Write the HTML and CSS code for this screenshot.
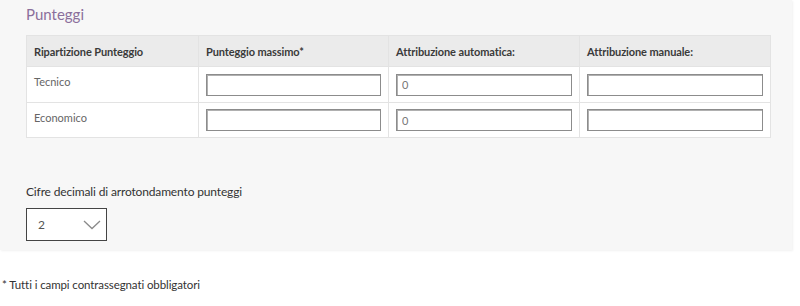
FILE: index.html
```html
<!DOCTYPE html>
<html lang="it">
<head>
<meta charset="utf-8">
<title>Punteggi</title>
<link rel="stylesheet" href="styles.css">
</head>
<body>
<section class="panel">
  <h2 class="title">Punteggi</h2>
  <table class="scores">
    <colgroup>
      <col class="c1"><col class="c2"><col class="c3"><col class="c4">
    </colgroup>
    <thead>
      <tr>
        <th>Ripartizione Punteggio</th>
        <th>Punteggio massimo*</th>
        <th>Attribuzione automatica:</th>
        <th>Attribuzione manuale:</th>
      </tr>
    </thead>
    <tbody>
      <tr class="row1">
        <td class="name">Tecnico</td>
        <td><input class="field" type="text"></td>
        <td><input class="field" type="text" value="0"></td>
        <td><input class="field" type="text"></td>
      </tr>
      <tr class="row2">
        <td class="name">Economico</td>
        <td><input class="field" type="text"></td>
        <td><input class="field" type="text" value="0"></td>
        <td><input class="field" type="text"></td>
      </tr>
    </tbody>
  </table>
  <div class="decimals">
    <label class="label">Cifre decimali di arrotondamento punteggi</label>
    <div class="select">
      <span class="select-value">2</span>
      <svg class="chevron" width="18" height="10" viewBox="0 0 18 10"><path d="M1 1 L9 8.5 L17 1" fill="none" stroke="#8a8a8a" stroke-width="1.3"/></svg>
    </div>
  </div>
</section>
<p class="note">* Tutti i campi contrassegnati obbligatori</p>
</body>
</html>
```
FILE: styles.css
```css
html, body {
  margin: 0;
  padding: 0;
  background: #fff;
  font-family: Lato, "Open Sans", sans-serif;
  color: #333;
}
.panel {
  width: 792px;
  height: 250px;
  box-sizing: border-box;
  padding: 4px 0 0 26px;
  background: #f7f7f7;
  box-shadow: 1px 1px 2px rgba(0,0,0,0.06);
}
.title {
  margin: 0;
  font-size: 15px;
  font-weight: 400;
  line-height: 20px;
  color: #8b6f9c;
  height: 31px;
}
.scores {
  border-collapse: collapse;
  width: 744px;
  table-layout: fixed;
  background: #fff;
}
.c1 { width: 172px; }
.c2 { width: 190px; }
.c3 { width: 191px; }
.c4 { width: 191px; }
.scores th, .scores td {
  border: 1px solid #e3e3e3;
  padding: 0 7px;
  text-align: left;
}
.scores thead tr { height: 31px; }
.scores .row1 { height: 36px; }
.scores .row2 { height: 35px; }
.scores th {
  background: #ebebeb;
  font-size: 11px;
  font-weight: 700;
  color: #3a3a3a;
  letter-spacing: -0.1px;
}
.scores td {
  font-size: 11px;
  line-height: 14px;
  color: #666;
  vertical-align: middle;
}
.scores td.name {
  vertical-align: top;
  padding-top: 8px;
}
.field {
  display: block;
  width: 100%;
  height: 22px;
  box-sizing: border-box;
  border: 1px solid #8c8c8c;
  box-shadow: inset 1px 1px 0 #b0b0b0;
  background: #fff;
  padding: 0 5px;
  font-family: Lato, sans-serif;
  font-size: 11px;
  color: #777;
  margin: 0;
}
.decimals {
  margin-top: 46px;
  display: flex;
  flex-direction: column;
  align-items: flex-start;
}
.label {
  font-size: 12px;
  line-height: 16px;
  color: #333;
  letter-spacing: -0.15px;
}
.select {
  margin-top: 8px;
  width: 81px;
  height: 33px;
  box-sizing: border-box;
  border: 1px solid #444;
  background: #fff;
  display: flex;
  align-items: center;
  justify-content: space-between;
  padding: 0 5px 0 11px;
}
.select-value {
  font-size: 12px;
  color: #555;
}
.note {
  margin: 28px 0 0 2px;
  font-size: 11.5px;
  line-height: 14px;
  color: #333;
  letter-spacing: -0.1px;
}
```
